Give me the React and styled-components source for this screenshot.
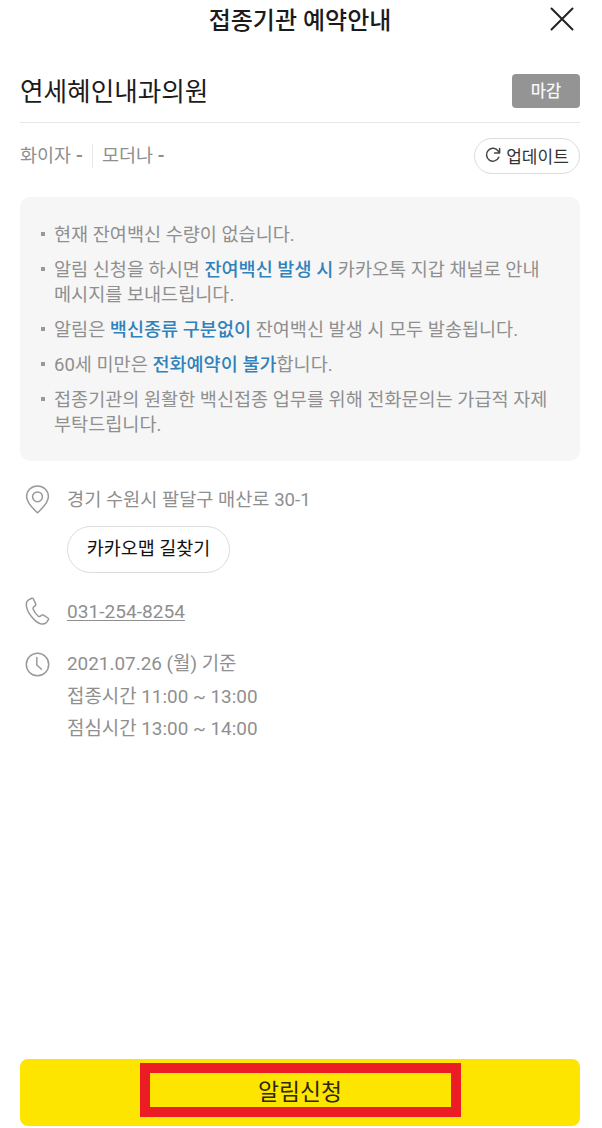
import React from 'react';
import styled, { createGlobalStyle } from 'styled-components';

const GlobalStyle = createGlobalStyle`
  * { box-sizing: border-box; }
  body {
    margin: 0;
    background: #fff;
    color: #8f8f8f;
    font-family: Roboto, "Noto Sans CJK KR", sans-serif;
  }
  button { font-family: inherit; padding: 0; cursor: pointer; }
`;

const Screen = styled.main`
  display: flex;
  flex-direction: column;
  height: 1128px;
  padding: 0 22px 2px 20px;
  overflow: hidden;
`;

const Header = styled.header`
  display: grid;
  grid-template-columns: 32px 1fr 32px;
  align-items: center;
  height: 40px;
`;

const Title = styled.h1`
  grid-column: 2;
  margin: 0;
  padding-top: 2px;
  text-align: center;
  font-size: 24px;
  line-height: 38px;
  font-weight: 500;
  color: #1b1b1b;
  white-space: nowrap;
`;

const CloseButton = styled.button`
  display: flex;
  justify-self: end;
  margin: 0 6px 2px 0;
  border: 0;
  background: none;
`;

const ClinicRow = styled.section`
  display: flex;
  align-items: center;
  justify-content: space-between;
  height: 83px;
  padding-top: 19px;
  border-bottom: 1px solid #e6e6e6;
`;

const ClinicName = styled.h2`
  margin: 0;
  padding-top: 2px;
  font-size: 25.6px;
  font-weight: 400;
  line-height: 36px;
  color: #1b1b1b;
`;

const Badge = styled.span`
  width: 68px;
  height: 34px;
  border-radius: 4px;
  background: #949494;
  color: #f7f7f7;
  font-size: 16.5px;
  font-weight: 500;
  line-height: 35px;
  text-align: center;
`;

const StockRow = styled.section`
  display: flex;
  align-items: center;
  height: 65px;
  margin-bottom: 9px;
  font-size: 18.5px;
`;

const Stock = styled.span`
  line-height: 24px;
  white-space: pre;
  b { font-weight: 700; }
  & + & {
    margin-left: 9px;
    padding-left: 9px;
    border-left: 1px solid #e8e8e8;
  }
`;

const UpdateButton = styled.button`
  display: flex;
  align-items: center;
  justify-content: center;
  gap: 5px;
  width: 106px;
  height: 36px;
  padding-bottom: 1px;
  margin-left: auto;
  border: 1px solid #dcdcdc;
  border-radius: 18px;
  background: #fff;
  color: #333;
  font-size: 17px;
  white-space: nowrap;
`;

const Notice = styled.ul`
  display: flex;
  flex-direction: column;
  gap: 10px;
  height: 264px;
  margin: 0;
  padding: 26px 20px 0 21px;
  border-radius: 10px;
  background: #f6f6f6;
  list-style: none;
`;

const NoticeItem = styled.li`
  display: flex;
  gap: 9px;
  font-size: 18.57px;
  line-height: 25px;
  white-space: nowrap;
  &::before {
    content: "";
    flex: none;
    width: 4px;
    height: 4px;
    margin-top: 9px;
    background: #999;
  }
`;

const Highlight = styled.em`
  font-style: normal;
  font-weight: 500;
  color: #2f82bb;
`;

const Details = styled.section`
  display: flex;
  flex-direction: column;
  padding: 23px 0 0 5px;
`;

const Detail = styled.div`
  display: grid;
  grid-template-columns: 25px 1fr;
  column-gap: 17px;
  margin-bottom: ${(p) => p.$gap || 0}px;
  font-size: ${(p) => p.$size || 18.8}px;
  line-height: 32.6px;
  svg { margin-top: ${(p) => p.$iconTop || 0}px; }
`;

const Phone = styled.a`
  color: inherit;
  text-decoration: underline;
  text-decoration-thickness: 1px;
  text-underline-offset: 2px;
`;

const MapButton = styled.button`
  display: block;
  width: 163px;
  height: 47px;
  margin-top: 9px;
  border: 1px solid #dcdcdc;
  border-radius: 24px;
  background: #fff;
  color: #111;
  font-size: 18.5px;
  line-height: 44px;
`;

const ApplyButton = styled.button`
  position: relative;
  height: 67px;
  margin-top: auto;
  border: 0;
  border-radius: 8px;
  background: #fee500;
  color: #2d290b;
  font-size: 22.8px;
  line-height: 65px;
`;

const Marker = styled.span`
  position: absolute;
  top: 4px;
  left: 120px;
  width: 321px;
  height: 54px;
  border: 10px solid #eb1c24;
`;

const LineIcon = styled.svg.attrs({ fill: 'none' })`
  display: block;
  stroke: ${(p) => p.$color || '#999'};
  stroke-width: ${(p) => p.$weight || 1.5};
  stroke-linecap: round;
  stroke-linejoin: round;
`;

export default function App() {
  return (
    <>
      <GlobalStyle />
      <Screen>
        <Header>
          <Title>접종기관 예약안내</Title>
          <CloseButton aria-label="닫기">
            <LineIcon width="24" height="24" $color="#222" $weight={2}>
              <path d="M1.5 1.5 22.5 22.5M22.5 1.5 1.5 22.5" />
            </LineIcon>
          </CloseButton>
        </Header>

        <ClinicRow>
          <ClinicName>연세혜인내과의원</ClinicName>
          <Badge>마감</Badge>
        </ClinicRow>

        <StockRow>
          <Stock>화이자 <b>-</b></Stock>
          <Stock>모더나 <b>-</b></Stock>
          <UpdateButton>
            <LineIcon width="16" height="16" $color="#444" $weight={1.5}>
              <path d="M13.8 10.3A6.4 6.4 0 1 1 13.2 4.1L14.6 5.8M14.6 1.4V5.9H9.6" />
            </LineIcon>
            업데이트
          </UpdateButton>
        </StockRow>

        <Notice>
          <NoticeItem><span>현재 잔여백신 수량이 없습니다.</span></NoticeItem>
          <NoticeItem>
            <span>
              알림 신청을 하시면 <Highlight>잔여백신 발생 시</Highlight> 카카오톡 지갑 채널로 안내
              <br />
              메시지를 보내드립니다.
            </span>
          </NoticeItem>
          <NoticeItem>
            <span>알림은 <Highlight>백신종류 구분없이</Highlight> 잔여백신 발생 시 모두 발송됩니다.</span>
          </NoticeItem>
          <NoticeItem>
            <span>60세 미만은 <Highlight>전화예약이 불가</Highlight>합니다.</span>
          </NoticeItem>
          <NoticeItem>
            <span>
              접종기관의 원활한 백신접종 업무를 위해 전화문의는 가급적 자제
              <br />
              부탁드립니다.
            </span>
          </NoticeItem>
        </Notice>

        <Details>
          <Detail $gap={23} $iconTop={1} $size={18.65}>
            <LineIcon width="25" height="30">
              <path d="M12.5 27.8C9.8 25.2 1.6 18.2 1.6 11.5a10.9 10.5 0 0 1 21.8 0c0 6.7-8.2 13.7-10.9 16.3Z" />
              <circle cx="12.5" cy="11.8" r="4.9" />
            </LineIcon>
            <div>
              경기 수원시 팔달구 매산로 30-1
              <MapButton>카카오맵 길찾기</MapButton>
            </div>
          </Detail>
          <Detail $gap={20} $iconTop={1} $size={19.1}>
            <LineIcon width="25" height="29">
              <path d="M4 2.6 6.8 1.3Q7.9.9 8.4 2L10.7 6.9Q11.1 7.9 10.300 8.700L8.500 10.200Q7.700 11 8.100 12C9.300 15 11 17.300 13.300 19.300Q14.100 19.900 15 19.300L16.800 18.100Q17.700 17.500 18.600 18.100L22.900 21Q24 21.800 23.200 22.900L22 24.900C20.800 26.700 18.400 27.500 15.500 26.700C9.200 24.700 1.300 14.500 1.300 7.400C1.300 5.100 2.200 3.500 4 2.600Z" />
            </LineIcon>
            <div><Phone href="tel:031-254-8254">031-254-8254</Phone></div>
          </Detail>
          <Detail $iconTop={4} $size={18.9}>
            <LineIcon width="25" height="25">
              <circle cx="12.5" cy="12.5" r="11.2" />
              <path d="M11.8 5.500V13L16.500 17.300" />
            </LineIcon>
            <div>
              2021.07.26 (월) 기준
              <br />
              접종시간 11:00 ~ 13:00
              <br />
              점심시간 13:00 ~ 14:00
            </div>
          </Detail>
        </Details>

        <ApplyButton>
          알림신청
          <Marker />
        </ApplyButton>
      </Screen>
    </>
  );
}
